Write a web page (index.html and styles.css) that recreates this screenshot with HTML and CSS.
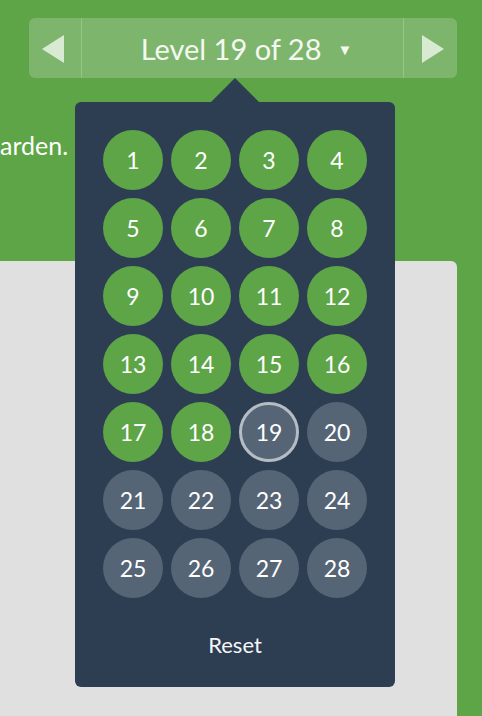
FILE: index.html
```html
<!DOCTYPE html>
<html lang="en">
<head>
<meta charset="utf-8">
<title>Flexbox Froggy – Level 19</title>
<link rel="stylesheet" href="styles.css">
</head>
<body>
<div class="page">
  <header class="top">
    <nav class="level-nav">
      <button class="arrow prev" aria-label="Previous level">
        <svg width="22" height="28" viewBox="0 0 22 28"><polygon points="22,0 22,28 0,14"/></svg>
      </button>
      <div class="level-indicator">Level 19 of 28 <span class="caret">▼</span></div>
      <button class="arrow next" aria-label="Next level">
        <svg width="22" height="28" viewBox="0 0 22 28"><polygon points="0,0 0,28 22,14"/></svg>
      </button>
    </nav>
  </header>
  <p class="instructions">garden.</p>
  <section class="board"></section>

  <div class="level-menu">
    <div class="levels">
      <span class="lvl done">1</span>
      <span class="lvl done">2</span>
      <span class="lvl done">3</span>
      <span class="lvl done">4</span>
      <span class="lvl done">5</span>
      <span class="lvl done">6</span>
      <span class="lvl done">7</span>
      <span class="lvl done">8</span>
      <span class="lvl done">9</span>
      <span class="lvl done">10</span>
      <span class="lvl done">11</span>
      <span class="lvl done">12</span>
      <span class="lvl done">13</span>
      <span class="lvl done">14</span>
      <span class="lvl done">15</span>
      <span class="lvl done">16</span>
      <span class="lvl done">17</span>
      <span class="lvl done">18</span>
      <span class="lvl current">19</span>
      <span class="lvl">20</span>
      <span class="lvl">21</span>
      <span class="lvl">22</span>
      <span class="lvl">23</span>
      <span class="lvl">24</span>
      <span class="lvl">25</span>
      <span class="lvl">26</span>
      <span class="lvl">27</span>
      <span class="lvl">28</span>
    </div>
    <div class="reset">Reset</div>
  </div>
</div>
</body>
</html>
```

FILE: styles.css
```css
* { box-sizing: border-box; }
html, body { margin: 0; padding: 0; }
body {
  background: #5da546;
  font-family: Lato, "Noto Sans", sans-serif;
  color: #fff;
}
.page {
  position: relative;
  width: 482px;
  height: 716px;
  overflow: hidden;
  display: flex;
  flex-direction: column;
}
.top {
  padding: 18px 0 0 29px;
}
.level-nav {
  display: flex;
  width: 428px;
  height: 60px;
  background: #7db56c;
  border-radius: 6px;
}
.arrow {
  border: 0;
  margin: 0;
  padding: 0;
  background: transparent;
  display: flex;
  align-items: center;
  justify-content: center;
  padding-top: 1px;
}
.arrow svg { fill: #d9ead3; display: block; }
.prev { width: 53px; border-right: 1px solid #96c588; padding-right: 4px; }
.next { width: 54px; border-left: 1px solid #96c588; padding-left: 4px; }
.level-indicator {
  flex: 1;
  display: flex;
  align-items: center;
  justify-content: center;
  font-size: 29px;
  color: #f4f8f1;
  padding-left: 8px;
}
.caret {
  font-size: 15px;
  margin-left: 16px;
  margin-top: 1px;
}
.instructions {
  margin: 52px 0 0;
  font-size: 25px;
  line-height: 30px;
  text-indent: -13px;
  white-space: nowrap;
  color: #fff;
}
.board {
  margin-top: 101px;
  width: 457px;
  flex: 1;
  background: #e0e0e0;
  border-top-right-radius: 6px;
}
.level-menu {
  position: absolute;
  left: 75px;
  top: 102px;
  width: 320px;
  padding: 28px 28px 27px;
  background: #2e3e52;
  border-radius: 6px;
}
.level-menu::before {
  content: "";
  position: absolute;
  top: -24px;
  left: 136px;
  border: 24px solid transparent;
  border-top: 0;
  border-bottom-color: #2e3e52;
}
.levels {
  display: grid;
  grid-template-columns: repeat(4, 60px);
  gap: 8px;
}
.lvl {
  width: 60px;
  height: 60px;
  border-radius: 50%;
  background: #566575;
  display: flex;
  align-items: center;
  justify-content: center;
  font-size: 23px;
  color: #fff;
}
.lvl.done { background: #5da546; }
.lvl.current { border: 3px solid #b6bcc3; }
.reset {
  margin-top: 32px;
  height: 30px;
  line-height: 30px;
  text-align: center;
  font-size: 22px;
  color: #f4f6f8;
}
```
